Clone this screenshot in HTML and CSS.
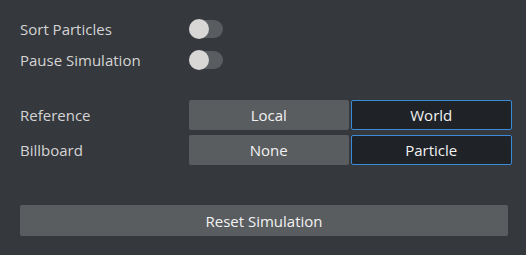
FILE: index.html
```html
<!DOCTYPE html>
<html lang="en">
<head>
  <meta charset="UTF-8" />
  <title>Particle Settings</title>
  <link rel="stylesheet" href="styles.css">
</head>
<body>
  <div class="panel">
    <div class="row">
      <div class="label">Sort Particles</div>
      <div class="toggle"><div class="knob"></div></div>
    </div>
    <div class="row">
      <div class="label">Pause Simulation</div>
      <div class="toggle"><div class="knob"></div></div>
    </div>

    <div class="choices">
      <div class="row btn-row">
        <div class="label">Reference</div>
        <div class="seg">
          <div class="btn">Local</div>
          <div class="btn active">World</div>
        </div>
      </div>
      <div class="row btn-row">
        <div class="label">Billboard</div>
        <div class="seg">
          <div class="btn">None</div>
          <div class="btn active">Particle</div>
        </div>
      </div>
    </div>

    <div class="reset">Reset Simulation</div>
  </div>
</body>
</html>
```

FILE: styles.css
```css
* {
  box-sizing: border-box;
}

html, body {
  margin: 0;
  background: #35383d;
}

body {
  font-family: 'Open Sans', 'Noto Sans', sans-serif;
  font-size: 15px;
  color: #d4d4d4;
  width: 526px;
  height: 255px;
  overflow: hidden;
}

.panel {
  padding: 13px 14px 0 20px;
  display: flex;
  flex-direction: column;
}

.row {
  display: flex;
  align-items: center;
  height: 31px;
}

.label {
  width: 169px;
  flex-shrink: 0;
}

.toggle {
  position: relative;
  width: 34px;
  height: 18px;
  border-radius: 9px;
  background: #5a5d60;
}

.knob {
  position: absolute;
  left: 0;
  top: -1px;
  width: 20px;
  height: 20px;
  border-radius: 50%;
  background: #d9d6d6;
}

.choices {
  margin-top: 25px;
  display: flex;
  flex-direction: column;
  gap: 5px;
}

.btn-row {
  height: 30px;
}

.seg {
  flex: 1;
  display: flex;
  gap: 2px;
  height: 30px;
}

.btn {
  flex: 1;
  display: flex;
  align-items: center;
  justify-content: center;
  background: #5a5d60;
  color: #f2f2f2;
  border-radius: 2px;
}

.btn.active {
  background: #1f2227;
  border: 1px solid #3b8ad8;
}

.reset {
  margin-top: 40px;
  margin-right: 4px;
  height: 31px;
  display: flex;
  align-items: center;
  justify-content: center;
  background: #5a5d60;
  color: #f2f2f2;
  border-radius: 2px;
}
```
